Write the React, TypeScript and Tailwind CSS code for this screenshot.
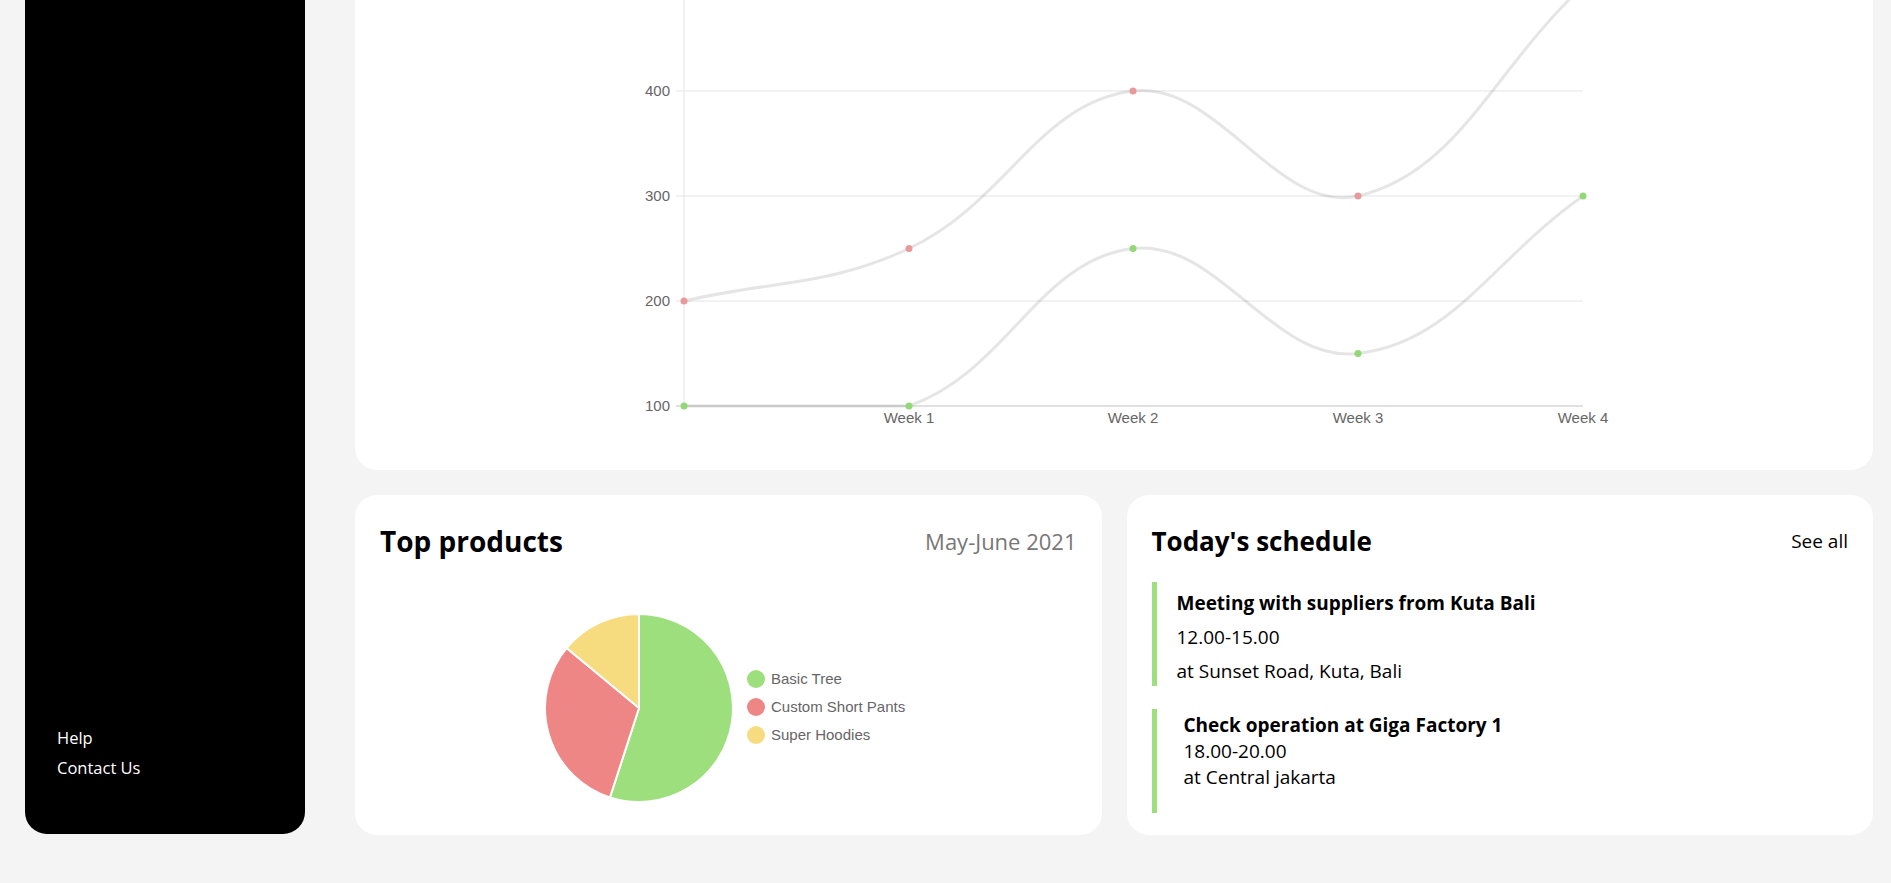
import React from 'react';

type Pt = { x: number; y: number };

// chart area in page pixels (the card starts at the top of the viewport)
const AREA = { left: 684, right: 1583, top: -14, bottom: 406 };
const xs = [684, 909, 1133, 1358, 1583];
const yFor = (v: number) => AREA.bottom - (v - 100) * 1.05;

const salesData = [200, 250, 400, 300, 500];
const ordersData = [100, 100, 250, 150, 300];

const clamp = (v: number, lo: number, hi: number) => Math.min(Math.max(v, lo), hi);

// same spline as chart.js (tension 0.4, control points capped to the area)
function splinePath(values: number[], tension = 0.4) {
  const pts: Pt[] = values.map((v, i) => ({ x: xs[i], y: yFor(v) }));
  const cps = pts.map((p, i) => {
    const prev = pts[Math.max(i - 1, 0)];
    const next = pts[Math.min(i + 1, pts.length - 1)];
    const d01 = Math.hypot(p.x - prev.x, p.y - prev.y);
    const d12 = Math.hypot(next.x - p.x, next.y - p.y);
    const sum = d01 + d12;
    const fa = sum ? (tension * d01) / sum : 0;
    const fb = sum ? (tension * d12) / sum : 0;
    const cap = (q: Pt) => ({
      x: clamp(q.x, AREA.left, AREA.right),
      y: clamp(q.y, AREA.top, AREA.bottom),
    });
    return {
      prev: cap({ x: p.x - fa * (next.x - prev.x), y: p.y - fa * (next.y - prev.y) }),
      next: cap({ x: p.x + fb * (next.x - prev.x), y: p.y + fb * (next.y - prev.y) }),
    };
  });
  let d = `M${pts[0].x},${pts[0].y}`;
  for (let i = 1; i < pts.length; i++) {
    d += ` C${cps[i - 1].next.x},${cps[i - 1].next.y} ${cps[i].prev.x},${cps[i].prev.y} ${pts[i].x},${pts[i].y}`;
  }
  return d;
}

function LineChart() {
  const ticks = [400, 300, 200];
  const labels = ['', 'Week 1', 'Week 2', 'Week 3', 'Week 4'];
  return (
    <svg width="1000" height="440" viewBox="614 0 1000 440" fontFamily="'Liberation Sans', Arial, sans-serif" fontSize="15">
      <defs>
        <clipPath id="area">
          <rect x={AREA.left - 2} y={AREA.top - 4} width={AREA.right - AREA.left + 4} height={AREA.bottom - AREA.top + 6} />
        </clipPath>
      </defs>
      {/* top grid line sits just above the visible part */}
      <line x1={676} x2={AREA.right} y1={yFor(500)} y2={yFor(500)} stroke="#e5e5e5" strokeWidth="1" />
      {ticks.map((t) => (
        <g key={t}>
          <line x1={676} x2={AREA.right} y1={yFor(t)} y2={yFor(t)} stroke="#e5e5e5" strokeWidth="1" />
          <text x={670} y={yFor(t) + 5} textAnchor="end" fill="#666">
            {t}
          </text>
        </g>
      ))}
      <line x1={676} x2={AREA.right} y1={AREA.bottom} y2={AREA.bottom} stroke="#d6d6d6" strokeWidth="1.5" />
      <text x={670} y={AREA.bottom + 5} textAnchor="end" fill="#666">
        100
      </text>
      <line x1={AREA.left} x2={AREA.left} y1={-20} y2={AREA.bottom} stroke="#e5e5e5" strokeWidth="1" />
      {labels.map((l, i) => (
        <text key={i} x={xs[i]} y={423} textAnchor="middle" fill="#666">
          {l}
        </text>
      ))}
      <g clipPath="url(#area)" fill="none" stroke="rgba(0,0,0,0.1)" strokeWidth="3">
        <path d={splinePath(salesData)} />
        <path d={splinePath(ordersData)} />
      </g>
      {salesData.map((v, i) => (
        <circle key={'s' + i} cx={xs[i]} cy={yFor(v)} r="3.5" fill="#e89a9a" />
      ))}
      {ordersData.map((v, i) => (
        <circle key={'o' + i} cx={xs[i]} cy={yFor(v)} r="3.5" fill="#92d876" />
      ))}
    </svg>
  );
}

const products = [
  { name: 'Basic Tree', value: 55, color: '#9ddf7c' },
  { name: 'Custom Short Pants', value: 31, color: '#ef8686' },
  { name: 'Super Hoodies', value: 14, color: '#f6dc7e' },
];

function PieChart() {
  const cx = 637;
  const cy = 708;
  const r = 94;
  const total = products.reduce((s, p) => s + p.value, 0);
  let start = 0;
  const pointAt = (a: number) => [cx + r * Math.sin(a), cy - r * Math.cos(a)];
  return (
    <svg width="400" height="210" viewBox="526 603 400 210" fontFamily="'Liberation Sans', Arial, sans-serif" fontSize="15">
      {products.map((p) => {
        const sweep = (p.value / total) * Math.PI * 2;
        const [x1, y1] = pointAt(start);
        const [x2, y2] = pointAt(start + sweep);
        const large = sweep > Math.PI ? 1 : 0;
        start += sweep;
        return (
          <path
            key={p.name}
            d={`M${cx},${cy} L${x1},${y1} A${r},${r} 0 ${large} 1 ${x2},${y2} Z`}
            fill={p.color}
            stroke="#fff"
            strokeWidth="2"
            strokeLinejoin="round"
          />
        );
      })}
      {products.map((p, i) => (
        <g key={p.name}>
          <circle cx={754} cy={679 + i * 28} r="9" fill={p.color} />
          <text x={769} y={684 + i * 28} fill="#666">
            {p.name}
          </text>
        </g>
      ))}
    </svg>
  );
}

export default function App() {
  return (
    <div className="flex h-[883px] overflow-hidden bg-[#f4f4f4] font-['Open_Sans',sans-serif] text-black">
      {/* Sidebar */}
      <aside className="ml-[25px] flex h-[834px] w-[280px] shrink-0 flex-col justify-end rounded-b-[22px] bg-black pb-[51px] pl-[32px] text-[16.5px] leading-[30px] text-white">
        <a href="#">Help</a>
        <a href="#">Contact Us</a>
      </aside>

      <main className="ml-[50px] mr-[18px] flex flex-1 flex-col gap-[25px]">
        {/* Weekly chart */}
        <section className="flex h-[470px] justify-center rounded-b-[22px] bg-white">
          <LineChart />
        </section>

        <div className="grid h-[340px] grid-cols-2 gap-[25px]">
          {/* Top products */}
          <section className="flex flex-col rounded-[22px] bg-white px-[25px] pt-[28px]">
            <div className="flex h-[36px] items-center justify-between">
              <h2 className="text-[28px] font-bold">Top products</h2>
              <span className="text-[22px] text-[#777]">May-June 2021</span>
            </div>
            <div className="mt-[44px] flex justify-center">
              <PieChart />
            </div>
          </section>

          {/* Schedule */}
          <section className="flex flex-col rounded-[22px] bg-white px-[25px] pt-[28px]">
            <div className="flex h-[36px] items-center justify-between">
              <h2 className="text-[26px] font-bold">Today's schedule</h2>
              <a href="#" className="text-[19px]">
                See all
              </a>
            </div>
            <div className="mt-[23px] flex flex-col gap-[23px]">
              <div className="flex h-[104px] flex-col gap-[10px] border-l-[5px] border-[#9ddf7d] pl-[20px] pt-[9px] text-[19px] leading-[24px]">
                <h3 className="font-bold">Meeting with suppliers from Kuta Bali</h3>
                <p>12.00-15.00</p>
                <p>at Sunset Road, Kuta, Bali</p>
              </div>
              <div className="flex h-[104px] flex-col border-l-[5px] border-[#9ddf7d] pl-[27px] pt-[3px] text-[19px] leading-[26px]">
                <h3 className="font-bold">Check operation at Giga Factory 1</h3>
                <p>18.00-20.00</p>
                <p>at Central jakarta</p>
              </div>
            </div>
          </section>
        </div>
      </main>
    </div>
  );
}
